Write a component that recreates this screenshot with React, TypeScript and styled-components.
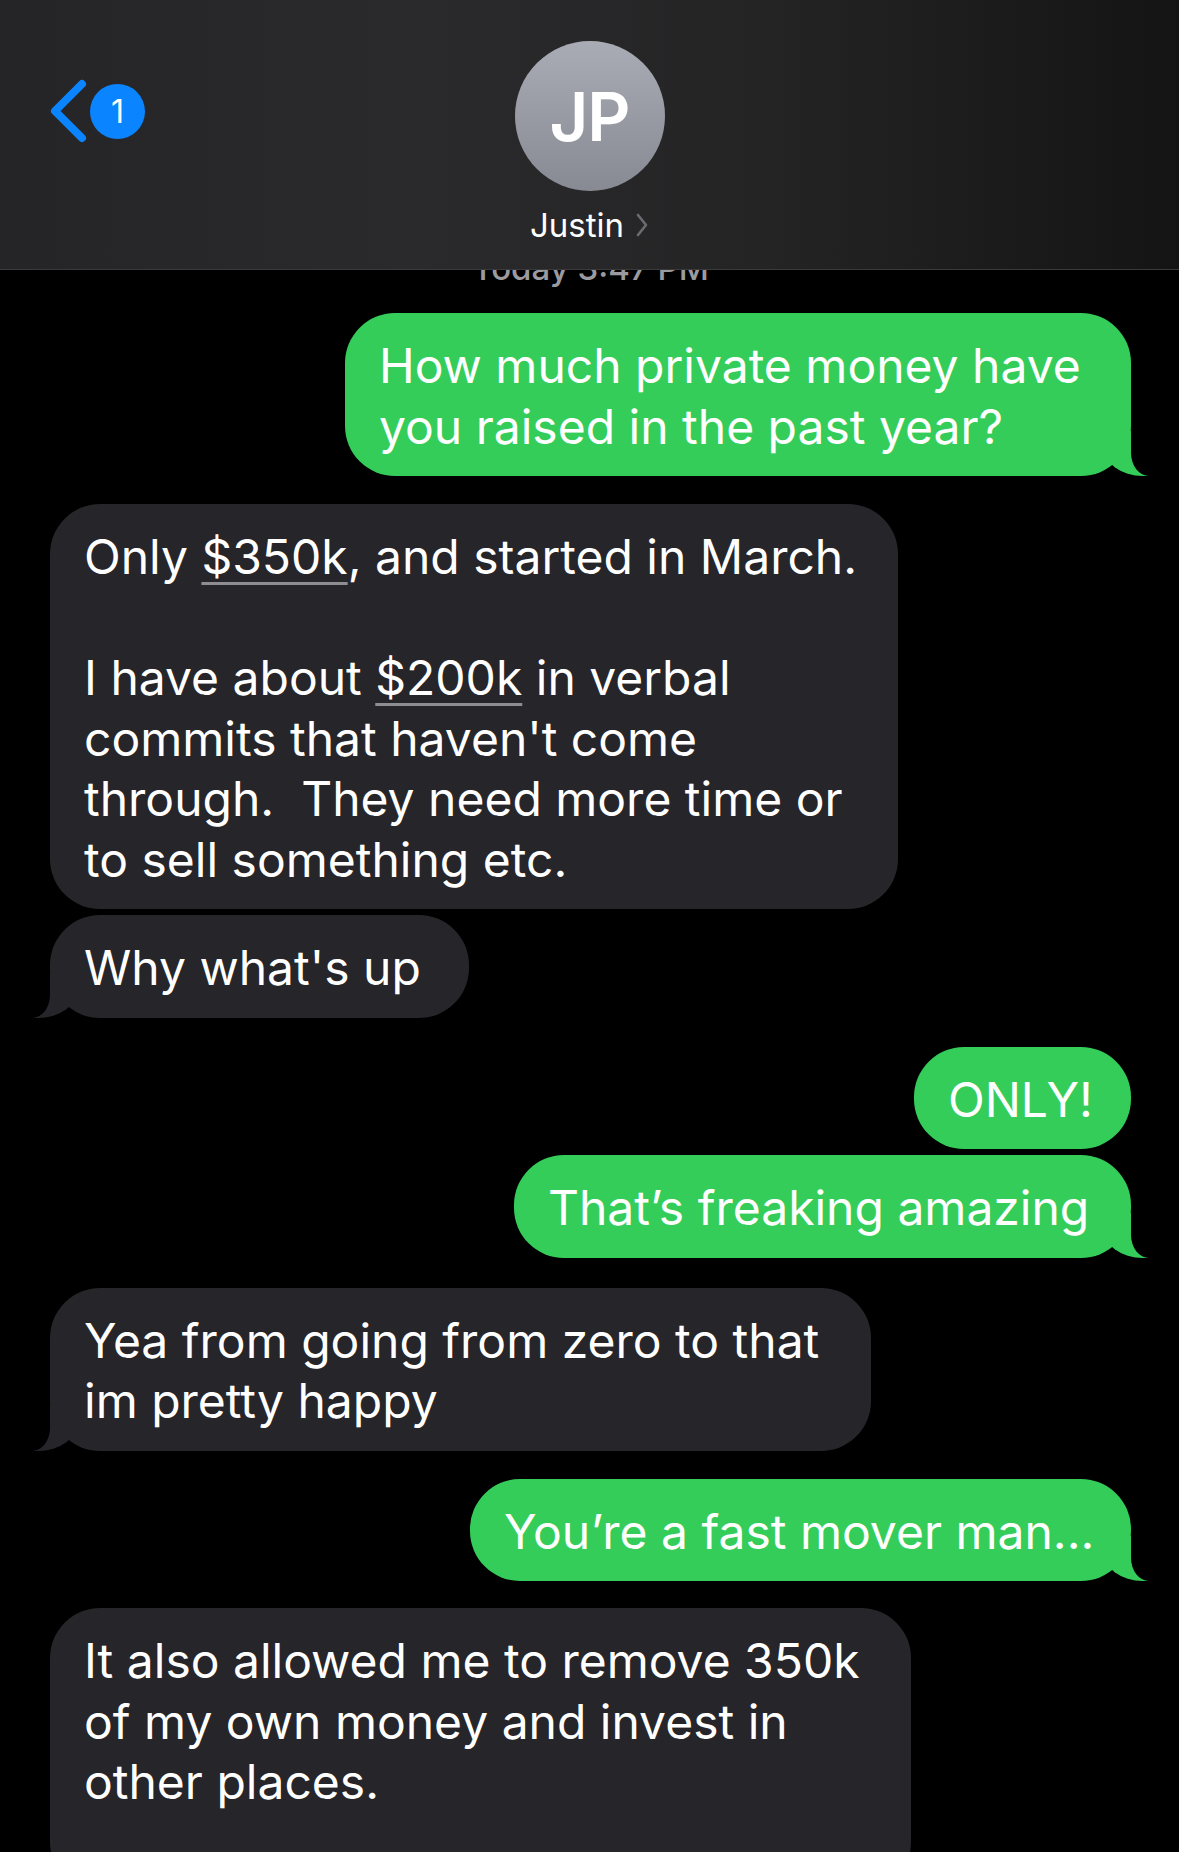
import React from 'react'
import styled, { createGlobalStyle } from 'styled-components'

const GlobalStyle = createGlobalStyle`
  html, body {
    margin: 0;
    padding: 0;
    background: #000;
  }
  body {
    font-family: Inter, "Noto Sans", "Liberation Sans", sans-serif;
    -webkit-font-smoothing: antialiased;
  }
`

const GREEN = '#35cd5a'
const GRAY = '#262529'

type BubbleProps = {
  $mine: boolean
  $tail: boolean
  $width: number
}

type RowProps = {
  $mine: boolean
  $gap: number
}

const Screen = styled.div`
  width: 1179px;
  height: 1852px;
  overflow: hidden;
  background: #000;
  display: flex;
  flex-direction: column;
`

const Header = styled.header`
  position: relative;
  z-index: 2;
  height: 269px;
  flex-shrink: 0;
  border-bottom: 1px solid #3a3a3c;
  background: linear-gradient(90deg, #252527 0%, #2a2a2c 35%, #242425 65%, #141415 100%);
  display: grid;
  grid-template-columns: 1fr auto 1fr;
`

const BackButton = styled.div`
  display: flex;
  align-items: center;
  gap: 3px;
  padding: 79px 0 0 47px;
  align-self: start;
`

const Badge = styled.span`
  width: 55px;
  height: 55px;
  border-radius: 50%;
  background: #0a84ff;
  color: #fff;
  font-size: 32px;
  font-weight: 400;
  display: flex;
  align-items: center;
  justify-content: center;
`

const Contact = styled.div`
  display: flex;
  flex-direction: column;
  align-items: center;
  padding-top: 41px;
`

const Avatar = styled.div`
  width: 150px;
  height: 150px;
  border-radius: 50%;
  background: linear-gradient(180deg, #a9acb5 0%, #878a93 100%);
  color: #fff;
  font-size: 67px;
  font-weight: 600;
  letter-spacing: -1px;
  display: flex;
  align-items: center;
  justify-content: center;
`

const NameRow = styled.div`
  margin-top: 14px;
  display: flex;
  align-items: center;
  gap: 11px;
  color: #fff;
  font-size: 33px;
  line-height: 40px;
  font-weight: 400;
`

const Thread = styled.main`
  display: flex;
  flex-direction: column;
  padding: 0 48px 0 50px;
`

const Stamp = styled.div`
  margin-top: -22px;
  text-align: center;
  color: #9a9a9f;
  font-size: 33px;
  line-height: 40px;
  font-weight: 500;
`

const Row = styled.div<RowProps>`
  display: flex;
  justify-content: ${(p) => (p.$mine ? 'flex-end' : 'flex-start')};
  margin-top: ${(p) => p.$gap}px;
`

const Bubble = styled.div<BubbleProps>`
  position: relative;
  box-sizing: border-box;
  width: ${(p) => p.$width}px;
  padding: 23px 0 19px 34px;
  border-radius: 50px;
  background: ${(p) => (p.$mine ? GREEN : GRAY)};
  color: #fff;
  font-size: 48px;
  line-height: 60.5px;
  letter-spacing: 0;
  white-space: nowrap;

  &::before,
  &::after {
    content: '';
    position: absolute;
    bottom: 0;
    display: ${(p) => (p.$tail ? 'block' : 'none')};
  }
  &::before {
    width: 45px;
    height: 45px;
    background: ${(p) => (p.$mine ? GREEN : GRAY)};
    ${(p) =>
      p.$mine
        ? 'right: -17px; border-bottom-left-radius: 40px 30px;'
        : 'left: -17px; border-bottom-right-radius: 40px 30px;'}
  }
  &::after {
    width: 47px;
    height: 52px;
    background: #000;
    ${(p) =>
      p.$mine
        ? 'right: -47px; border-bottom-left-radius: 18px 23px;'
        : 'left: -47px; border-bottom-right-radius: 18px 23px;'}
  }
`

const Amount = styled.span`
  text-decoration: underline;
  text-decoration-color: #8d8d92;
  text-decoration-thickness: 3px;
  text-underline-offset: 8px;
`

type Message = {
  mine: boolean
  tail: boolean
  gap: number
  width: number
  body: React.ReactNode
}

const messages: Message[] = [
  {
    mine: true,
    tail: true,
    gap: 25,
    width: 786,
    body: (
      <>
        How much private money have
        <br />
        you raised in the past year?
      </>
    )
  },
  {
    mine: false,
    tail: false,
    gap: 28,
    width: 848,
    body: (
      <>
        Only <Amount>$350k</Amount>, and started in March.
        <br />
        <br />I have about <Amount>$200k</Amount> in verbal
        <br />
        commits that haven't come
        <br />
        through.&nbsp; They need more time or
        <br />
        to sell something etc.
      </>
    )
  },
  { mine: false, tail: true, gap: 6, width: 419, body: "Why what's up" },
  { mine: true, tail: false, gap: 29, width: 217, body: 'ONLY!' },
  { mine: true, tail: true, gap: 6, width: 617, body: 'That\u2019s freaking amazing' },
  {
    mine: false,
    tail: true,
    gap: 30,
    width: 821,
    body: (
      <>
        Yea from going from zero to that
        <br />
        im pretty happy
      </>
    )
  },
  { mine: true, tail: true, gap: 28, width: 661, body: 'You\u2019re a fast mover man...' },
  {
    mine: false,
    tail: false,
    gap: 27,
    width: 861,
    body: (
      <>
        It also allowed me to remove 350k
        <br />
        of my own money and invest in
        <br />
        other places.
        <br />
        &nbsp;
      </>
    )
  }
]

function BackChevron() {
  return (
    <svg width="40" height="64" viewBox="0 0 40 64">
      <polyline
        points="35,5 8,32 35,59"
        fill="none"
        stroke="#0a84ff"
        strokeWidth="8"
        strokeLinecap="round"
        strokeLinejoin="round"
      />
    </svg>
  )
}

function SmallChevron() {
  return (
    <svg width="14" height="26" viewBox="0 0 14 26">
      <polyline
        points="3,3 11,13 3,23"
        fill="none"
        stroke="#6c6c70"
        strokeWidth="2.6"
        strokeLinecap="round"
        strokeLinejoin="round"
      />
    </svg>
  )
}

export default function App() {
  return (
    <>
      <GlobalStyle />
      <Screen>
        <Header>
          <BackButton>
            <BackChevron />
            <Badge>1</Badge>
          </BackButton>
          <Contact>
            <Avatar>JP</Avatar>
            <NameRow>
              Justin
              <SmallChevron />
            </NameRow>
          </Contact>
          <div />
        </Header>
        <Thread>
          <Stamp>Today 3:47 PM</Stamp>
          {messages.map((m, i) => (
            <Row key={i} $mine={m.mine} $gap={m.gap}>
              <Bubble $mine={m.mine} $tail={m.tail} $width={m.width}>
                {m.body}
              </Bubble>
            </Row>
          ))}
        </Thread>
      </Screen>
    </>
  )
}
